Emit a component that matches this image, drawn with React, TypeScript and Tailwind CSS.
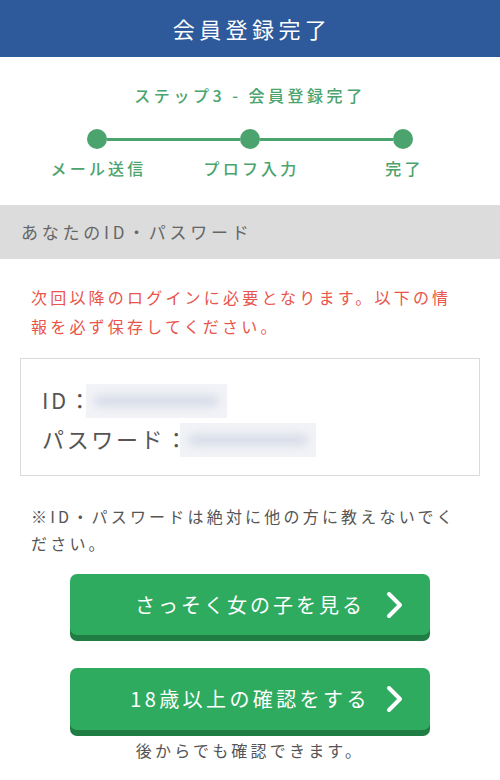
import React from "react";

const font = { fontFamily: "'Noto Sans CJK JP', 'Noto Sans', sans-serif" };

function Chevron() {
  return (
    <svg width="20" height="28" viewBox="0 0 20 28" className="shrink-0">
      <polyline points="4,3 15,14 4,25" fill="none" stroke="white" strokeWidth="4" strokeLinecap="round" strokeLinejoin="round" />
    </svg>
  );
}

function Step({ label, pos }: { label: string; pos: "first" | "mid" | "last" }) {
  return (
    <div className="flex flex-col items-center">
      <div className="flex w-full items-center">
        <div className={`h-[3px] flex-1 ${pos === "first" ? "bg-transparent" : "bg-[#4ba36d]"}`} />
        <div className="h-[20px] w-[20px] shrink-0 rounded-full bg-[#4ba36d]" />
        <div className={`h-[3px] flex-1 ${pos === "last" ? "bg-transparent" : "bg-[#4ba36d]"}`} />
      </div>
      <div className="mt-[9px] pl-[3px] text-[16px] leading-[20px] font-medium tracking-[0.2em] text-[#4ba36d]">{label}</div>
    </div>
  );
}

function Blur({ w }: { w: number }) {
  return (
    <span className="relative inline-flex items-center bg-[#f2f3f7]" style={{ width: w, height: 34 }}>
      <span className="mx-[8px] h-[12px] flex-1 rounded-full bg-[#d9dde8] blur-[4px]" />
    </span>
  );
}

export default function App() {
  return (
    <div className="min-h-[780px] w-[500px] bg-white" style={font}>
      <header className="flex h-[57px] items-center justify-center bg-[#2e5a9c]">
        <h1 className="pl-[4px] text-[22px] font-normal tracking-[0.2em] text-white">会員登録完了</h1>
      </header>

      <div className="pt-[26px] text-center text-[16px] leading-[24px] font-medium tracking-[0.22em] text-[#4ba36d]">
        ステップ3 - 会員登録完了
      </div>

      <div className="mx-auto mt-[22px] grid w-[459px] grid-cols-3">
        <Step label="メール送信" pos="first" />
        <Step label="プロフ入力" pos="mid" />
        <Step label="完了" pos="last" />
      </div>

      <div className="mt-[27px] flex h-[54px] items-center bg-[#dcdcdc] px-[21px] text-[17px] tracking-[0.22em] text-[#666]">
        あなたのID・パスワード
      </div>

      <div className="mt-[24px] px-[31px] text-[16px] leading-[29px] tracking-[0.2em] text-[#e8554b]">
        <div className="whitespace-nowrap">次回以降のログインに必要となります。以下の情</div>
        <div className="whitespace-nowrap">報を必ず保存してください。</div>
      </div>

      <div className="mx-[20px] mt-[17px] border border-[#dadada] px-[21px] pt-[20px] pb-[18px] text-[22px] leading-[36px] tracking-[0.12em] text-[#555]">
        <div className="flex items-center">
          <span>ID：</span>
          <span className="-ml-[8px]"><Blur w={141} /></span>
        </div>
        <div className="flex items-center">
          <span>パスワード：</span>
          <span className="-ml-[10px]"><Blur w={136} /></span>
        </div>
      </div>

      <div className="mt-[27px] px-[31px] text-[16px] leading-[27px] tracking-[0.2em] text-[#555]">
        <div className="whitespace-nowrap">※ID・パスワードは絶対に他の方に教えないでく</div>
        <div>ださい。</div>
      </div>

      <div className="mt-[17px] flex flex-col items-center">
        <button className="relative flex h-[61px] w-[360px] items-center justify-center rounded-[7px] bg-[#2eab5f] text-[20px] tracking-[0.15em] text-white shadow-[0_6px_0_#1f7d43]">
          <span className="pl-0">さっそく女の子を見る</span>
          <span className="absolute right-[25px] top-1/2 -translate-y-1/2"><Chevron /></span>
        </button>
        <button className="relative mt-[33px] flex h-[62px] w-[360px] items-center justify-center rounded-[7px] bg-[#2eab5f] text-[20px] tracking-[0.17em] text-white shadow-[0_6px_0_#1f7d43]">
          <span className="pl-0">18歳以上の確認をする</span>
          <span className="absolute right-[25px] top-1/2 -translate-y-1/2"><Chevron /></span>
        </button>
        <div className="mt-[8px] text-[16px] leading-[24px] tracking-[0.2em] text-[#555]">後からでも確認できます。</div>
      </div>
    </div>
  );
}
